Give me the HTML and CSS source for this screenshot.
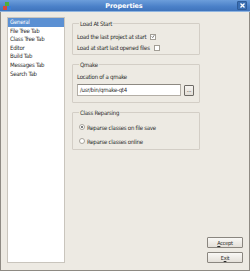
FILE: index.html
```html
<!DOCTYPE html>
<html lang="en">
<head>
    <meta charset="UTF-8">
    <title>Properties</title>
    <link rel="stylesheet" href="styles.css">
</head>
<body>
    <div class="window">
        <div class="titlebar">
            <svg class="app-icon" width="8" height="8" viewBox="0 0 8 8">
                <rect x="0" y="4" width="4" height="4" fill="#d9463b"/>
                <rect x="4" y="4" width="4" height="4" fill="#3d7fd6"/>
                <rect x="2" y="0" width="4" height="4" fill="#4fae3c"/>
            </svg>
            <span class="title">Properties</span>
            <span class="close">
                <svg width="5" height="5" viewBox="0 0 5 5">
                    <path d="M0.5 0.5L4.5 4.5M4.5 0.5L0.5 4.5" stroke="#fff" stroke-width="1.3"/>
                </svg>
            </span>
        </div>

        <div class="content">
            <ul class="page-list">
                <li class="selected">General</li>
                <li>File Tree Tab</li>
                <li>Class Tree Tab</li>
                <li>Editor</li>
                <li>Build Tab</li>
                <li>Messages Tab</li>
                <li>Search Tab</li>
            </ul>

            <div class="groups">
                <fieldset class="group group-start">
                    <legend>Load At Start</legend>
                    <div class="check-row">
                        <span>Load the last project at start</span>
                        <span class="checkbox checked">
                            <svg width="6" height="6" viewBox="0 0 6 6">
                                <path d="M1 3L2.5 4.6L5 1" fill="none" stroke="#3b3b3b" stroke-width="1"/>
                            </svg>
                        </span>
                    </div>
                    <div class="check-row">
                        <span>Load at start last opened files</span>
                        <span class="checkbox"></span>
                    </div>
                </fieldset>

                <fieldset class="group group-qmake">
                    <legend>Qmake</legend>
                    <div class="field-label">Location of a qmake</div>
                    <div class="path-row">
                        <span class="path-input">/usr/bin/qmake-qt4</span>
                        <span class="browse">...</span>
                    </div>
                </fieldset>

                <fieldset class="group group-reparse">
                    <legend>Class Reparsing</legend>
                    <div class="radio-row"><span class="radio checked"></span>Reparse classes on file save</div>
                    <div class="radio-row"><span class="radio"></span>Reparse classes online</div>
                </fieldset>
            </div>

            <div class="actions">
                <button><u>A</u>ccept</button>
                <button>E<u>x</u>it</button>
            </div>
        </div>
    </div>
</body>
</html>
```

FILE: styles.css
```css
* {
    margin: 0;
    padding: 0;
    box-sizing: border-box;
}

body {
    font-family: "DejaVu Sans Condensed", "DejaVu Sans", sans-serif;
    font-size: 6px;
    letter-spacing: -0.25px;
    color: #2a2a2a;
    background: #edeae3;
}

.window {
    width: 250px;
    height: 271px;
    border: 1px solid #8e8a83;
    border-top: none;
    background: #edeae3;
    display: flex;
    flex-direction: column;
}

.titlebar {
    height: 12px;
    margin: 0 -1px;
    background: linear-gradient(#6c9edb, #4a80c8 60%, #3f74bc);
    border-bottom: 1px solid #8fb4e0;
    display: flex;
    align-items: center;
    padding: 0 3px;
}

.app-icon {
    flex: none;
}

.title {
    flex: 1;
    text-align: center;
    color: #fff;
    font-family: "DejaVu Sans", sans-serif;
    font-size: 6.5px;
    font-weight: bold;
    letter-spacing: -0.1px;
}

.close {
    width: 10px;
    height: 9px;
    background: #3a6eb3;
    border: 1px solid #2f5c98;
    border-radius: 1px;
    display: flex;
    align-items: center;
    justify-content: center;
}

.content {
    flex: 1;
    display: flex;
    padding: 5px 6px 7px 6px;
}

.page-list {
    list-style: none;
    width: 58px;
    background: #fff;
    border: 1px solid #c9c5bd;
}

.page-list li {
    height: 8.6px;
    line-height: 8.6px;
    padding-left: 2px;
    white-space: nowrap;
}

.page-list li.selected {
    background: #5b90d3;
    color: #fff;
}

.groups {
    width: 128px;
    margin-left: 7px;
    display: flex;
    flex-direction: column;
    gap: 6px;
    padding-top: 3px;
}

.group {
    border: 1px solid #d3cec6;
    border-radius: 1px;
    padding: 0 4px;
}

.group legend {
    margin-left: 2px;
    padding: 0 1px;
    line-height: 7px;
}

.group-start {
    height: 35px;
}

.check-row {
    display: flex;
    align-items: center;
    height: 11px;
    gap: 4px;
}

.check-row:first-of-type {
    margin-top: 4px;
}

.checkbox {
    width: 6px;
    height: 6px;
    background: #fff;
    border: 1px solid #a29e96;
    display: flex;
    align-items: center;
    justify-content: center;
}

.checkbox svg {
    width: 5px;
    height: 5px;
}

.group-qmake {
    height: 42px;
}

.field-label {
    margin-top: 5px;
    height: 8px;
    line-height: 8px;
}

.path-row {
    display: flex;
    align-items: center;
    margin-top: 3px;
    gap: 3px;
}

.path-input {
    width: 104px;
    height: 12px;
    background: #fff;
    border: 1px solid #b3aea6;
    border-top-color: #8d8982;
    line-height: 10px;
    padding-left: 2px;
}

.browse {
    width: 10px;
    height: 11px;
    border: 1px solid #6d6a65;
    border-radius: 1px;
    background: linear-gradient(#f6f4f0, #e2ded7);
    text-align: center;
    line-height: 7px;
}

.group-reparse {
    height: 41px;
}

.radio-row {
    display: flex;
    align-items: center;
    height: 14px;
    gap: 2px;
    padding-left: 2px;
}

.radio-row:first-of-type {
    margin-top: 4px;
}

.radio {
    width: 6px;
    height: 6px;
    border-radius: 50%;
    border: 1px solid #a9a59d;
    background: #fff;
    display: flex;
    align-items: center;
    justify-content: center;
}

.radio.checked::after {
    content: "";
    width: 2px;
    height: 2px;
    border-radius: 50%;
    background: #555;
}

.actions {
    margin-left: auto;
    align-self: flex-end;
    display: flex;
    flex-direction: column;
    gap: 4px;
}

.actions button {
    width: 36px;
    height: 11px;
    font-family: inherit;
    font-size: 5.5px;
    letter-spacing: inherit;
    color: #2a2a2a;
    border: 1px solid #8a867f;
    border-radius: 1px;
    background: linear-gradient(#f9f8f5, #e4e0d9);
}
```
